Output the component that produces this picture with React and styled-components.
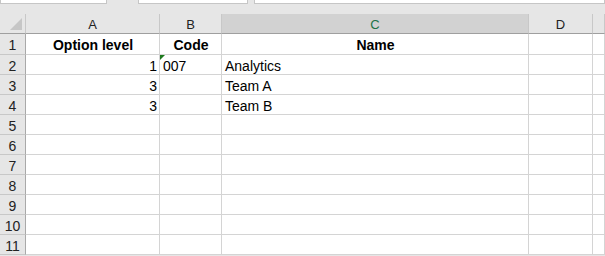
import React from "react";
import styled, { createGlobalStyle } from "styled-components";

const Global = createGlobalStyle`
  html, body { margin: 0; padding: 0; background: #e6e6e6; }
  body { font-family: "Liberation Sans", Arial, sans-serif; overflow: hidden; }
`;

const Page = styled.div`
  width: 605px;
  height: 256px;
  background: #e6e6e6;
  display: flex;
  flex-direction: column;
  overflow: hidden;
`;

const TopStrip = styled.div`
  height: 14px;
  display: flex;
  align-items: flex-start;
`;

const BarBox = styled.div`
  height: 3px;
  background: #fff;
  border: 1px solid #c6c6c6;
  border-top: none;
  width: ${(p) => p.$w};
  margin-left: ${(p) => p.$ml || "0px"};
  flex: ${(p) => (p.$grow ? "1" : "none")};
  box-sizing: content-box;
`;

const COLS = "26px 134px 62px 307px 64px 1fr";

const Grid = styled.div`
  display: grid;
  grid-template-columns: ${COLS};
  grid-template-rows: 20px 21px;
  grid-auto-rows: 20px;
  background: #fff;
`;

const Corner = styled.div`
  position: relative;
  background: #e6e6e6;
  border-right: 1px solid #c8c8c8;
  border-bottom: 1px solid #9f9f9f;
  box-sizing: border-box;
  svg { position: absolute; right: 3px; bottom: 3px; }
`;

const ColHead = styled.div`
  background: ${(p) => (p.$sel ? "#d2d2d2" : "#e6e6e6")};
  color: ${(p) => (p.$sel ? "#217346" : "#222")};
  border-right: 1px solid #c8c8c8;
  border-bottom: 1px solid #9f9f9f;
  box-sizing: border-box;
  display: flex;
  align-items: center;
  justify-content: center;
  font-size: 13px;
  padding-top: 1px;
`;

const RowHead = styled.div`
  background: #e6e6e6;
  color: #222;
  border-right: 1px solid #a9a9a9;
  border-bottom: 1px solid #c8c8c8;
  box-sizing: border-box;
  display: flex;
  align-items: center;
  justify-content: center;
  font-size: 14px;
  padding-top: 2px;
`;

const Cell = styled.div`
  position: relative;
  border-right: 1px solid #d4d4d4;
  border-bottom: 1px solid #d4d4d4;
  box-sizing: border-box;
  display: flex;
  align-items: center;
  justify-content: ${(p) =>
    p.$align === "right" ? "flex-end" : p.$align === "center" ? "center" : "flex-start"};
  padding: 2px 2px 0 3px;
  font-size: 14px;
  font-weight: ${(p) => (p.$bold ? 700 : 400)};
  color: #000;
  white-space: nowrap;
`;

const Flag = styled.span`
  position: absolute;
  left: 0;
  top: 0;
  width: 0;
  height: 0;
  border-top: 5px solid #1e7a1e;
  border-right: 5px solid transparent;
`;

const cols = ["A", "B", "C", "D", ""];

const data = [
  [
    { v: "Option level", b: true, a: "center" },
    { v: "Code", b: true, a: "center" },
    { v: "Name", b: true, a: "center" },
    {},
    {},
  ],
  [{ v: "1", a: "right" }, { v: "007", flag: true }, { v: "Analytics" }, {}, {}],
  [{ v: "3", a: "right" }, {}, { v: "Team A" }, {}, {}],
  [{ v: "3", a: "right" }, {}, { v: "Team B" }, {}, {}],
];

export default function App() {
  const rows = Array.from({ length: 11 }, (_, i) => data[i] || [{}, {}, {}, {}, {}]);
  return (
    <Page>
      <Global />
      <TopStrip>
        <BarBox $w="105px" />
        <BarBox $w="108px" $ml="31px" />
        <BarBox $ml="6px" $grow />
      </TopStrip>
      <Grid>
        <Corner>
          <svg width="12" height="12" viewBox="0 0 12 12">
            <polygon points="12,0 12,12 0,12" fill="#c6c6c6" />
          </svg>
        </Corner>
        {cols.map((c, i) => (
          <ColHead key={i} $sel={c === "C"}>
            {c}
          </ColHead>
        ))}
        {rows.map((r, ri) => (
          <React.Fragment key={ri}>
            <RowHead>{ri + 1}</RowHead>
            {r.map((cell, ci) => (
              <Cell key={ci} $bold={cell.b} $align={cell.a}>
                {cell.flag && <Flag />}
                {cell.v}
              </Cell>
            ))}
          </React.Fragment>
        ))}
      </Grid>
    </Page>
  );
}
